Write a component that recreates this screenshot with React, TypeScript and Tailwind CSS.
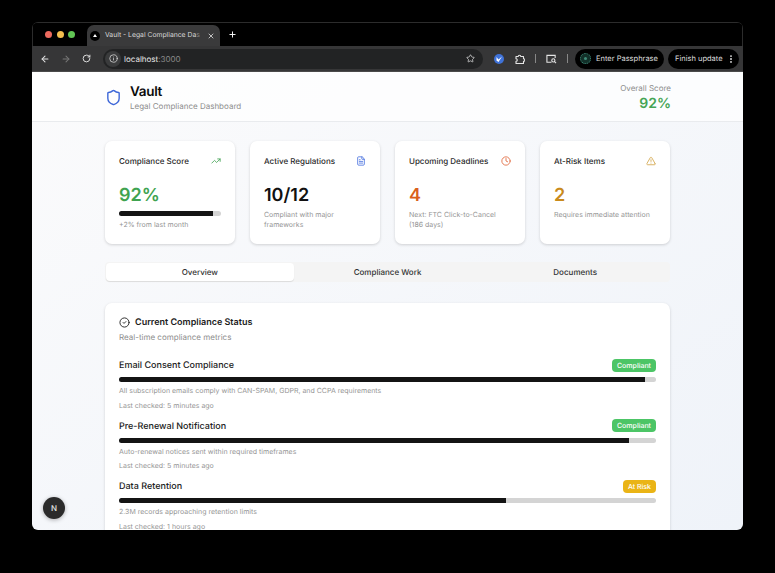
import React from 'react';
import {
  ArrowLeft,
  ArrowRight,
  CircleCheck,
  Clock,
  EllipsisVertical,
  FileText,
  Info,
  Plus,
  RotateCw,
  Shield,
  Star,
  TrendingUp,
  TriangleAlert,
  X,
} from 'lucide-react';

const metrics = [
  {
    title: 'Active Regulations',
    value: '10/12',
    valueClass: 'text-[#111111]',
    note: ['Compliant with major', 'frameworks'],
    icon: <FileText size={10} className="text-[#4a72e0]" />,
  },
  {
    title: 'Upcoming Deadlines',
    value: '4',
    valueClass: 'text-[#d9601c]',
    note: ['Next: FTC Click-to-Cancel', '(186 days)'],
    icon: <Clock size={10} className="text-[#e0663a]" />,
  },
  {
    title: 'At-Risk Items',
    value: '2',
    valueClass: 'text-[#c98a1c]',
    note: ['Requires immediate attention'],
    icon: <TriangleAlert size={10} className="text-[#d2a548]" />,
  },
];

const statusRows = [
  {
    name: 'Email Consent Compliance',
    badge: 'Compliant',
    badgeClass: 'bg-[#4cc566]',
    progress: 98,
    note: 'All subscription emails comply with CAN-SPAM, GDPR, and CCPA requirements',
    checked: 'Last checked: 5 minutes ago',
  },
  {
    name: 'Pre-Renewal Notification',
    badge: 'Compliant',
    badgeClass: 'bg-[#4cc566]',
    progress: 95,
    note: 'Auto-renewal notices sent within required timeframes',
    checked: 'Last checked: 5 minutes ago',
  },
  {
    name: 'Data Retention',
    badge: 'At Risk',
    badgeClass: 'bg-[#eab416]',
    progress: 72,
    note: '2.3M records approaching retention limits',
    checked: 'Last checked: 1 hours ago',
  },
];

const BrowserChrome = () => (
  <>
    <div className="flex h-[23px] items-end border-x border-[#2c2c2c] bg-black pl-[12px]">
      <div className="mb-[8px] flex gap-[4.5px]">
        <span className="h-[7px] w-[7px] rounded-full bg-[#ec6a5e]" />
        <span className="h-[7px] w-[7px] rounded-full bg-[#f4bf4f]" />
        <span className="h-[7px] w-[7px] rounded-full bg-[#61c554]" />
      </div>
      <div className="ml-[12px] flex h-[21px] w-[133px] items-center rounded-t-[7px] bg-[#3a3a3b] pl-[3px] pr-[5px]">
        <span className="flex h-[10px] w-[10px] shrink-0 items-center justify-center rounded-full bg-black">
          <span className="h-0 w-0 border-x-[2px] border-b-[3px] border-x-transparent border-b-white" />
        </span>
        <span className="ml-[5px] flex-1 whitespace-nowrap text-[6.8px] text-[#d8d8d8]">
          Vault - Legal Compliance Da<span className="text-[#8a8a8a]">s</span>
        </span>
        <X size={8} className="shrink-0 text-[#dddddd]" strokeWidth={2.5} />
      </div>
      <Plus size={9} className="mb-[7px] ml-[8px] text-white" strokeWidth={2.5} />
    </div>
    <div className="flex h-[26px] items-center border-b border-[#4a4a4a] bg-[#363637] pl-[8px] pr-[4px]">
      <ArrowLeft size={10} className="text-[#e4e4e4]" strokeWidth={2.5} />
      <ArrowRight size={10} className="ml-[11px] text-[#777777]" strokeWidth={2.5} />
      <RotateCw size={9} className="ml-[11px] text-[#e4e4e4]" strokeWidth={2.5} />
      <div className="ml-[12px] flex h-[20px] w-[380px] items-center rounded-full bg-[#222324] pl-[2px] pr-[8px]">
        <span className="flex h-[16px] w-[16px] items-center justify-center rounded-full bg-[#3a3b3c]">
          <Info size={9} className="text-[#dddddd]" />
        </span>
        <span className="ml-[3px] text-[8px] text-[#e8e8e8]">
          localhost<span className="text-[#8a8a8a]">:3000</span>
        </span>
        <Star size={9} className="ml-auto text-[#dddddd]" strokeWidth={2} />
      </div>
      <svg viewBox="0 0 10 10" className="ml-[11px] h-[10px] w-[10px]">
        <circle cx="5" cy="5" r="5" fill="#3f72d8" />
        <path d="M2.5 3v3.5L4.5 8 8 2.5 4.5 5.500z" fill="#ffffff" />
      </svg>
      <svg viewBox="0 0 10 10" className="ml-[11px] h-[10px] w-[10px] text-[#e4e4e4]" fill="none" stroke="currentColor" strokeWidth="1.1" strokeLinejoin="round">
        <path d="M1 2.5h2.200a1.300 1.300 0 0 1 2.600 0H8.500v2.200a1.300 1.300 0 0 1 0 2.600V9.500H1V7.300a1.300 1.300 0 0 0 0-2.600z" />
      </svg>
      <span className="ml-[10px] h-[9px] w-px bg-[#888888]" />
      <svg viewBox="0 0 12 10" className="ml-[10px] h-[10px] w-[11px] text-[#e4e4e4]" fill="none" stroke="currentColor" strokeWidth="1.2">
        <path d="M6 8.500H1V1h9v3" />
        <circle cx="8" cy="6.500" r="1.700" />
        <path d="M9.300 7.800 11 9.400" />
      </svg>
      <span className="ml-[10px] h-[9px] w-px bg-[#888888]" />
      <div className="ml-[7px] flex h-[20px] w-[89px] items-center rounded-full bg-black pl-[5px]">
        <span className="flex h-[11px] w-[11px] items-center justify-center rounded-full border border-dotted border-[#3f8a78] bg-[#123029]">
          <span className="h-[3px] w-[3px] rounded-full bg-[#3f8a78]" />
        </span>
        <span className="ml-[5px] text-[7.5px] text-[#dedede]">Enter Passphrase</span>
      </div>
      <div className="ml-[4px] flex h-[20px] w-[71px] items-center rounded-full bg-black pl-[7px]">
        <span className="text-[7.5px] text-[#dedede]">Finish update</span>
        <EllipsisVertical size={10} className="ml-[3px] text-[#e4e4e4]" strokeWidth={2.5} />
      </div>
    </div>
  </>
);

const ProgressBar = ({ value }: { value: number }) => (
  <div className="h-[5px] w-full overflow-hidden rounded-full bg-[#d4d4d4]">
    <div className="h-full bg-[#141414]" style={{ width: `${value}%` }} />
  </div>
);

const CardTitle = ({ title, icon }: { title: string; icon: React.ReactNode }) => (
  <div className="flex h-[13px] items-center justify-between">
    <span className="text-[8px] font-medium text-[#2a2a2a]">{title}</span>
    {icon}
  </div>
);

const cardClass = 'h-[103px] rounded-[7px] bg-white px-[14px] pt-[13px] shadow-[0_1px_3px_rgba(0,0,0,0.16)]';

export default function App() {
  return (
    <div className="h-[573px] w-[775px] overflow-hidden bg-black pl-[32px] pt-[22px] font-['Inter',sans-serif] [text-rendering:geometricPrecision]">
      <div className="relative flex h-[508px] w-[711px] flex-col overflow-hidden rounded-[6px] border-t border-[#2c2c2c]">
        <BrowserChrome />

        <div className="min-h-0 flex-1 overflow-hidden bg-gradient-to-br from-[#fbfbfc] to-[#eff3f9]">
          <header className="flex h-[50px] items-start justify-between border-b border-[#e9ebee] bg-[#ffffff]/70 pl-[73px] pr-[72px]">
            <div className="flex items-center pt-[11px]">
              <Shield size={17} className="text-[#3f68d8]" strokeWidth={2} />
              <div className="ml-[8px]">
                <h1 className="text-[13.5px] font-semibold leading-[18px] tracking-[-0.3px] text-[#0c0c0c]">Vault</h1>
                <p className="-mt-px text-[8px] leading-[12px] text-[#8d8d8d]">Legal Compliance Dashboard</p>
              </div>
            </div>
            <div className="pt-[10px] text-right">
              <p className="text-[8px] leading-[12px] text-[#8d8d8d]">Overall Score</p>
              <p className="mt-px text-[14px] font-semibold leading-[18px] text-[#45a455]">92%</p>
            </div>
          </header>

          <main className="px-[73px] pt-[19px]">
            <div className="grid grid-cols-4 gap-[15px]">
              <div className={cardClass}>
                <CardTitle title="Compliance Score" icon={<TrendingUp size={10} className="text-[#45a455]" />} />
                <p className="mt-[17px] text-[18px] font-semibold leading-[24px] text-[#3fa350]">92%</p>
                <div className="mt-[3px]">
                  <ProgressBar value={92} />
                </div>
                <p className="mt-[4px] text-[7px] leading-[10px] text-[#959595]">+2% from last month</p>
              </div>
              {metrics.map((metric) => (
                <div key={metric.title} className={cardClass}>
                  <CardTitle title={metric.title} icon={metric.icon} />
                  <p className={`mt-[17px] text-[18px] font-semibold leading-[24px] ${metric.valueClass}`}>{metric.value}</p>
                  <div className="mt-[2px]">
                    {metric.note.map((line) => (
                      <p key={line} className="text-[7px] leading-[9.5px] text-[#959595]">{line}</p>
                    ))}
                  </div>
                </div>
              ))}
            </div>

            <div className="mt-[18px] grid h-[20px] grid-cols-3 rounded-[4px] bg-[#f4f4f4] p-px">
              <div className="flex items-center justify-center rounded-[4px] bg-white text-[8px] font-medium text-[#333333] shadow-[0_1px_1px_rgba(0,0,0,0.1)]">Overview</div>
              <div className="flex items-center justify-center text-[8px] font-medium text-[#333333]">Compliance Work</div>
              <div className="flex items-center justify-center text-[8px] font-medium text-[#333333]">Documents</div>
            </div>

            <section className="mt-[21px] rounded-[7px] bg-white px-[14px] pb-[14px] pt-[13px] shadow-[0_1px_3px_rgba(0,0,0,0.16)]">
              <div className="flex h-[13px] items-center">
                <CircleCheck size={11} className="text-[#222222]" strokeWidth={2} />
                <h2 className="ml-[5px] text-[9px] font-semibold text-[#1c1c1c]">Current Compliance Status</h2>
              </div>
              <p className="mt-[3px] text-[8px] leading-[11px] text-[#8d8d8d]">Real-time compliance metrics</p>

              <div className="mt-[15px] flex flex-col gap-[9px]">
                {statusRows.map((row) => (
                  <div key={row.name}>
                    <div className="flex h-[14px] items-center justify-between">
                      <span className="pt-[2px] text-[9px] font-medium text-[#222222]">{row.name}</span>
                      <span className={`rounded-[4px] px-[5px] text-[7px] font-medium leading-[13px] text-white ${row.badgeClass}`}>{row.badge}</span>
                    </div>
                    <div className="mt-[5px]">
                      <ProgressBar value={row.progress} />
                    </div>
                    <p className="mt-[4px] text-[7px] leading-[10px] text-[#959595]">{row.note}</p>
                    <p className="mt-[4.5px] text-[7px] leading-[9px] text-[#959595]">{row.checked}</p>
                  </div>
                ))}
              </div>
            </section>
          </main>
        </div>

        <div className="absolute bottom-[11px] left-[11px] flex h-[22px] w-[22px] items-center justify-center rounded-full bg-[#2b2b2b] text-[8px] font-medium text-[#e8e8e8] shadow-[0_1px_4px_rgba(0,0,0,0.3)]">
          N
        </div>
      </div>
    </div>
  );
}
